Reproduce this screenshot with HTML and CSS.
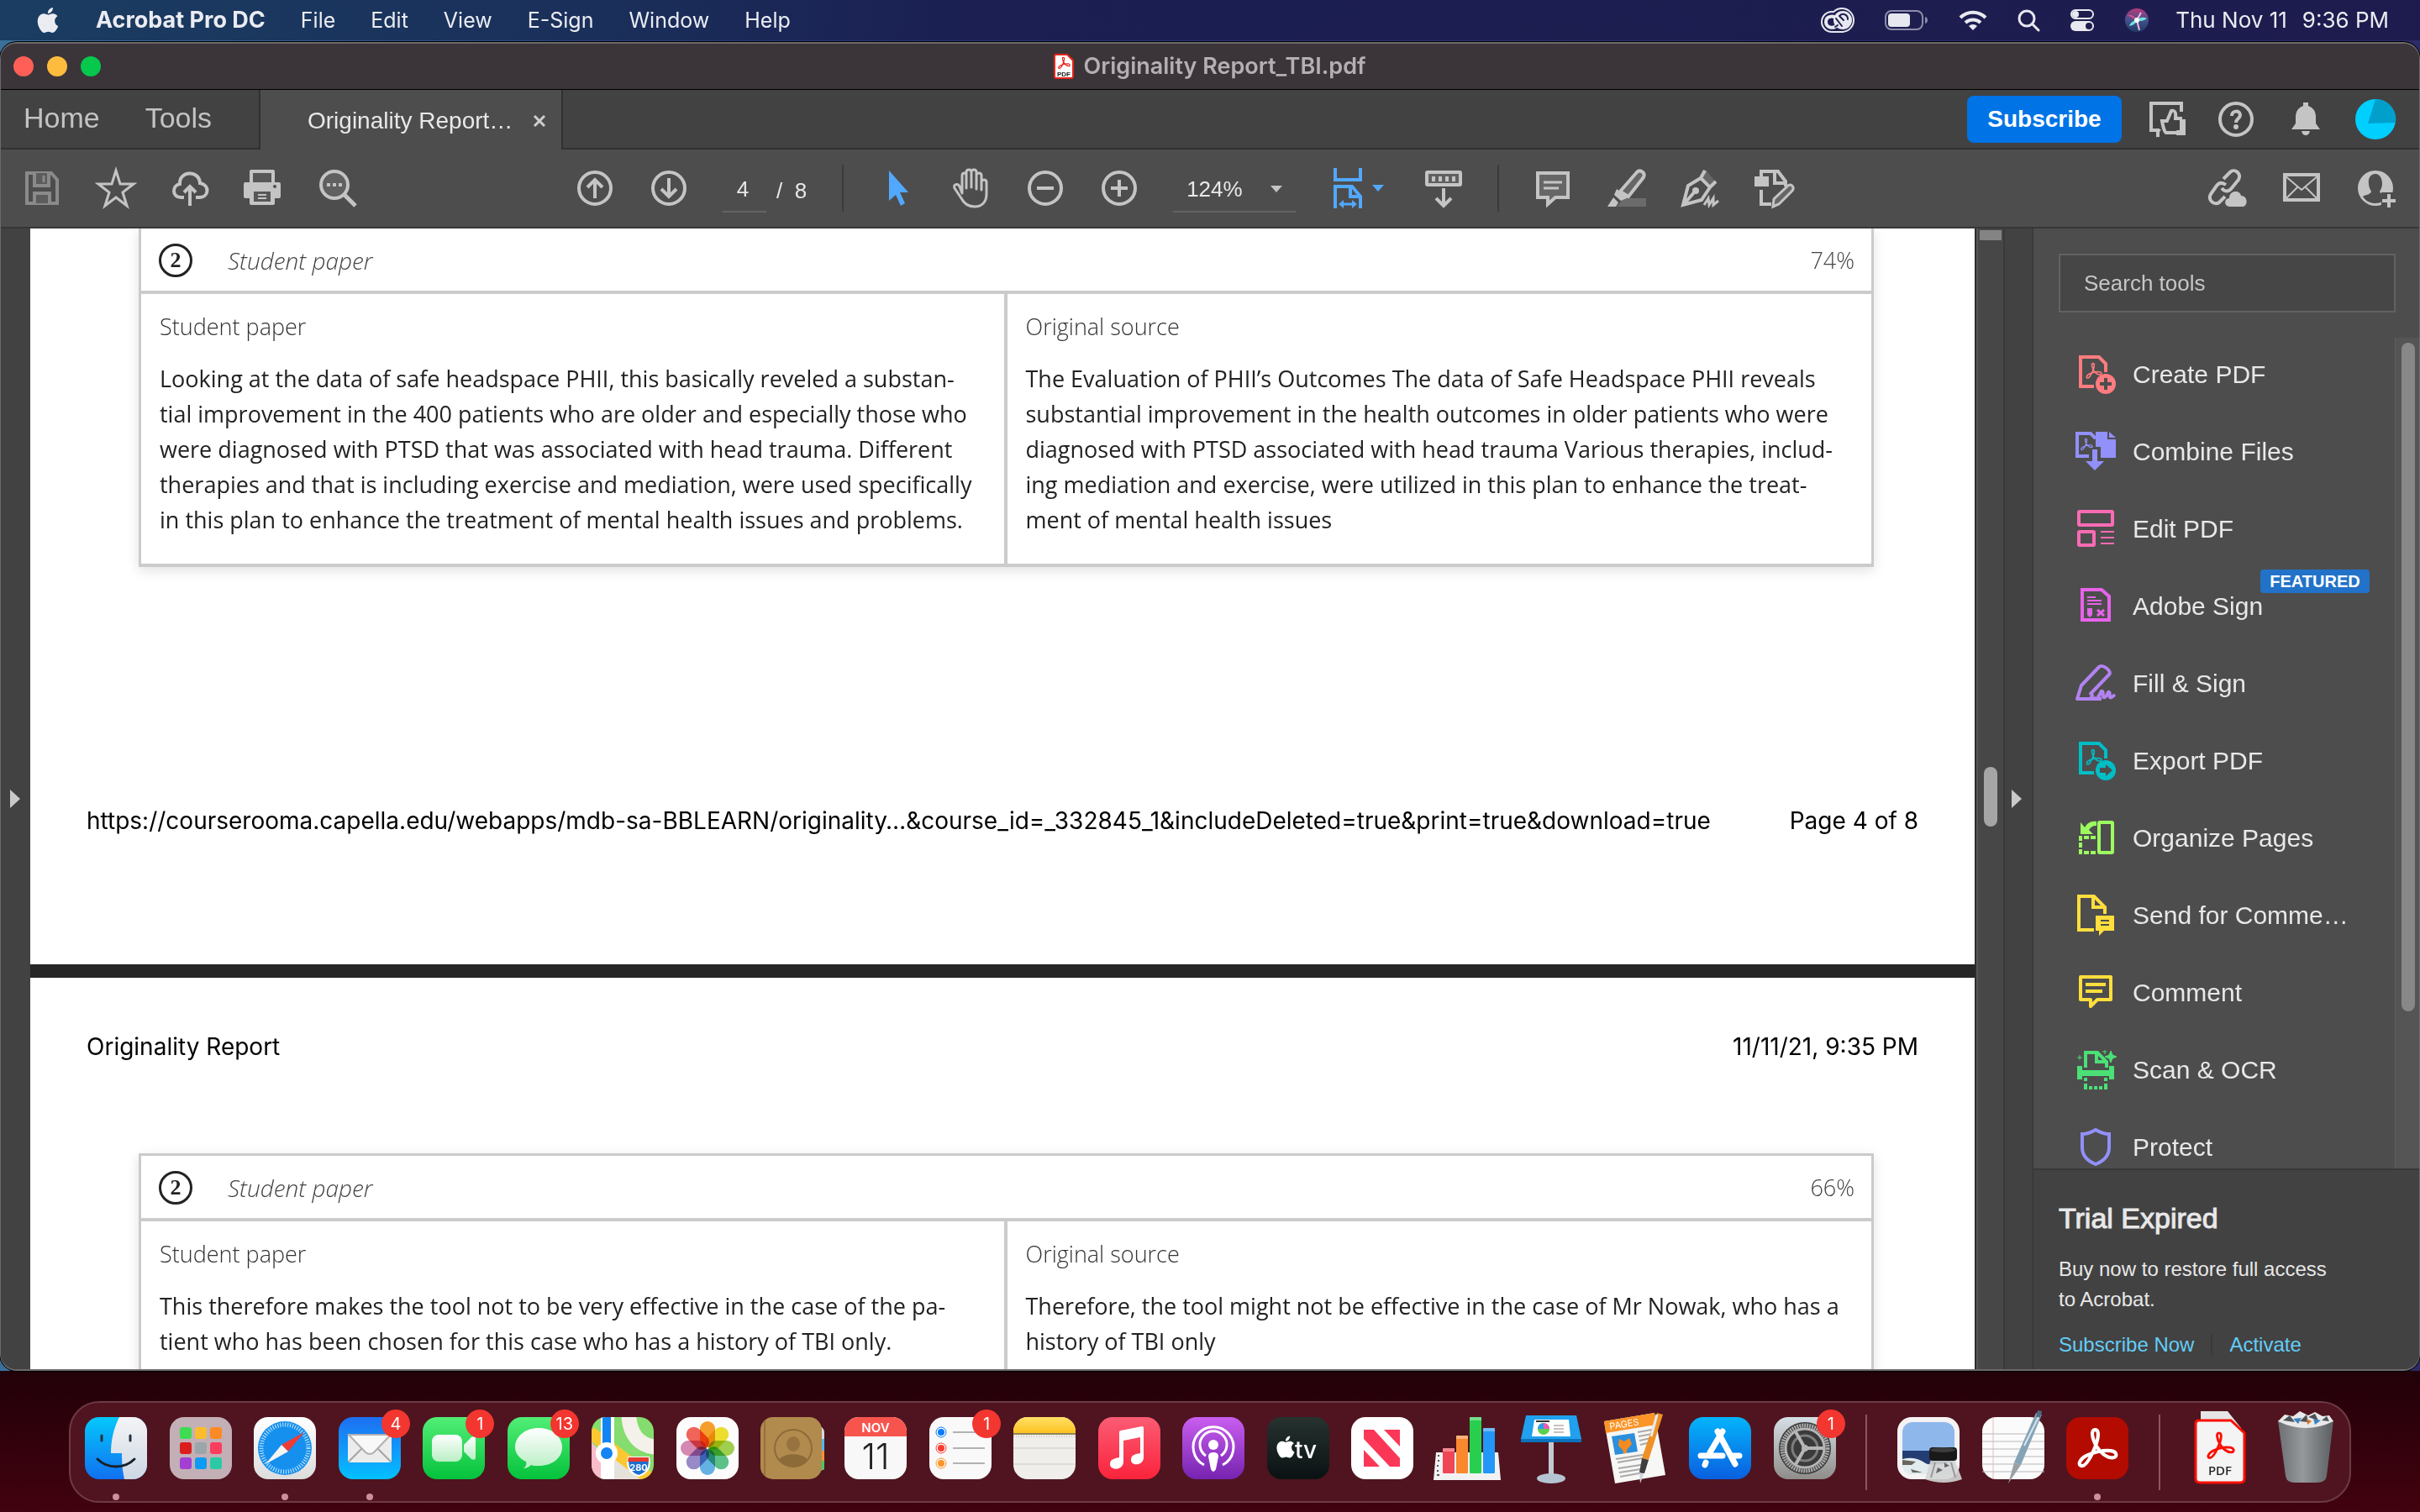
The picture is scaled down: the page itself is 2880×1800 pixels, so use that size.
FILE: index.html
```html
<!DOCTYPE html>
<html lang="en">
<head>
<meta charset="utf-8">
<title>Originality Report_TBI.pdf</title>
<link rel="stylesheet" href="styles.css">
</head>
<body>
<svg class="defs" aria-hidden="true">
  <defs>
    <linearGradient id="g-blue" x1="0" y1="0" x2="0" y2="1"><stop offset="0" stop-color="#1d6ff2"/><stop offset="1" stop-color="#04c0ff"/></linearGradient>
    <linearGradient id="g-store" x1="0" y1="0" x2="0" y2="1"><stop offset="0" stop-color="#04b4fb"/><stop offset="1" stop-color="#0a5fe0"/></linearGradient>
    <linearGradient id="g-finder" x1="0" y1="0" x2="0" y2="1"><stop offset="0" stop-color="#05c8fb"/><stop offset="1" stop-color="#1170f0"/></linearGradient>
    <linearGradient id="g-green" x1="0" y1="0" x2="0" y2="1"><stop offset="0" stop-color="#52ee76"/><stop offset="1" stop-color="#04c23c"/></linearGradient>
    <linearGradient id="g-white" x1="0" y1="0" x2="0" y2="1"><stop offset="0" stop-color="#ffffff"/><stop offset="1" stop-color="#dcdcdc"/></linearGradient>
    <linearGradient id="g-cam" x1="0" y1="0" x2="0" y2="1"><stop offset="0" stop-color="#ffffff"/><stop offset="1" stop-color="#b9efc4"/></linearGradient>
    <linearGradient id="g-face" x1="0" y1="0" x2="0" y2="1"><stop offset="0" stop-color="#f4f4f6"/><stop offset="1" stop-color="#cdd8e4"/></linearGradient>
    <linearGradient id="g-red" x1="0" y1="0" x2="0" y2="1"><stop offset="0" stop-color="#fb5c74"/><stop offset="1" stop-color="#fa233b"/></linearGradient>
    <linearGradient id="g-purple" x1="0" y1="0" x2="0" y2="1"><stop offset="0" stop-color="#c95ef0"/><stop offset="1" stop-color="#7623b0"/></linearGradient>
    <linearGradient id="g-tv" x1="0" y1="0" x2="0" y2="1"><stop offset="0" stop-color="#26332f"/><stop offset="1" stop-color="#0b1113"/></linearGradient>
    <linearGradient id="g-gear" x1="0" y1="0" x2="0" y2="1"><stop offset="0" stop-color="#d5dfe6"/><stop offset="1" stop-color="#8f8d8a"/></linearGradient>
    <linearGradient id="g-notes" x1="0" y1="0" x2="0" y2="1"><stop offset="0" stop-color="#ffe066"/><stop offset="1" stop-color="#fdc220"/></linearGradient>
    <linearGradient id="g-trash" x1="0" y1="0" x2="1" y2="0"><stop offset="0" stop-color="#6d7073"/><stop offset=".45" stop-color="#95999c"/><stop offset="1" stop-color="#5b5e61"/></linearGradient>
    <linearGradient id="g-siri" x1="0" y1="0" x2="0" y2="1"><stop offset="0" stop-color="#b8387c"/><stop offset=".5" stop-color="#43528c"/><stop offset="1" stop-color="#1f3a66"/></linearGradient>
    <clipPath id="tile"><rect width="74" height="74" rx="17"/></clipPath>
    <symbol id="acro" viewBox="0 0 100 100"><path d="M47 8c-11 0-7 20 3 38 9 15 24 26 36 26 13 0 12-14-3-16-17-2-40 3-56 11-14 7-20 19-13 23 10 4 22-18 30-36 9-20 15-46 3-46z" fill="none" stroke="currentColor" stroke-width="8" stroke-linejoin="round"/></symbol>
    <symbol id="apple" viewBox="0 0 24 24"><path fill="currentColor" d="M12.152 6.896c-.948 0-2.415-1.078-3.96-1.04-2.04.027-3.91 1.183-4.961 3.014-2.117 3.675-.546 9.103 1.519 12.09 1.013 1.454 2.208 3.09 3.792 3.039 1.52-.065 2.09-.987 3.935-.987 1.831 0 2.35.987 3.96.948 1.637-.026 2.676-1.48 3.676-2.948 1.156-1.688 1.636-3.325 1.662-3.415-.039-.013-3.182-1.221-3.22-4.857-.026-3.04 2.48-4.494 2.597-4.559-1.429-2.09-3.623-2.324-4.39-2.376-2-.156-3.675 1.09-4.61 1.09zM15.53 3.83c.843-1.012 1.4-2.427 1.245-3.83-1.207.052-2.662.805-3.532 1.818-.78.896-1.454 2.338-1.273 3.714 1.338.104 2.715-.688 3.559-1.701"/></symbol>
  </defs>
</svg>

<header class="menubar">
  <nav class="menus" aria-label="Application menu">
    <button class="menu" aria-label="Apple"><svg class="apple"><use href="#apple"/></svg></button>
    <button class="menu app-name">Acrobat Pro DC</button>
    <button class="menu">File</button>
    <button class="menu">Edit</button>
    <button class="menu">View</button>
    <button class="menu">E-Sign</button>
    <button class="menu">Window</button>
    <button class="menu">Help</button>
  </nav>
  <div class="status">
    <svg width="40" height="30" viewBox="0 0 40 30"><g fill="#e8e8f0"><circle cx="13" cy="17" r="13"/><circle cx="25" cy="15" r="15"/><path d="M13 20h14v10H13z"/></g><g fill="#1d1e50"><circle cx="13" cy="17" r="11"/><circle cx="25" cy="15" r="13"/><path d="M13 20h12v8H13z"/></g><circle cx="26" cy="15" r="11" fill="#e8e8f0"/><g fill="none" stroke-linecap="round"><path d="M19 21c-4 5-13 3-13-4s9-8 12-4l8 8" stroke="#e8e8f0" stroke-width="4"/><path d="M17 23l3-2M18 13l7 9M22 10l5 5M22 10c4-4 10-2 10 4" stroke="#1d1e50" stroke-width="2"/></g></svg>
    <svg width="52" height="24" viewBox="0 0 52 24"><rect x="1" y="1" width="44" height="22" rx="7" fill="none" stroke="#8d8cab" stroke-width="2"/><rect x="4" y="4" width="26" height="16" rx="4" fill="#e8e8f0"/><path d="M48 8c4 1 4 7 0 8z" fill="#8d8cab"/></svg>
    <svg width="34" height="26" viewBox="0 0 34 26" fill="none" stroke="#e8e8f0" stroke-width="4"><path d="M2 10a21 21 0 0 1 30 0M8 16a13 13 0 0 1 18 0"/><path d="M17 25l-5-5a7 7 0 0 1 10 0z" fill="#e8e8f0" stroke="none"/></svg>
    <svg width="26" height="26" viewBox="0 0 26 26" fill="none" stroke="#e8e8f0" stroke-width="3"><circle cx="11" cy="11" r="9"/><path d="M18 18l7 7" stroke-linecap="round"/></svg>
    <svg width="30" height="28" viewBox="0 0 30 28"><rect x="2" y="2" width="26" height="10" rx="5" fill="none" stroke="#e8e8f0" stroke-width="2"/><circle cx="7" cy="7" r="4" fill="#e8e8f0"/><rect x="1" y="15" width="28" height="12" rx="6" fill="#e8e8f0"/><circle cx="23" cy="21" r="4" fill="#1d1d50"/></svg>
    <svg width="28" height="28" viewBox="0 0 28 28"><circle cx="14" cy="14" r="14" fill="url(#g-siri)"/><path d="M14 14L3 8c5-1 9 2 11 6z" fill="#e24b8c"/><path d="M14 14c4-4 8-4 12-2-4 3-8 4-12 2zM14 14c-3 0-8 3-9 7 5-1 8-3 9-7z" fill="#6fe3dc"/><path d="M14 14l3 12M14 14l5-9" stroke="#f3b9e2" stroke-width="2"/><circle cx="14" cy="14" r="3" fill="#fff"/></svg>
    <time class="clock"><span>Thu Nov 11</span><span>9:36 PM</span></time>
  </div>
</header>

<section class="window">
  <div class="titlebar">
    <div class="lights">
      <button class="light close" aria-label="Close"></button>
      <button class="light mini" aria-label="Minimize"></button>
      <button class="light full" aria-label="Full screen"></button>
    </div>
    <h1 class="title"><svg class="doc-icon" viewBox="0 0 24 30"><path d="M1 3q0-2 2-2h13l7 7v19q0 2-2 2H3q-2 0-2-2z" fill="#fff" stroke="#e5251b" stroke-width="2"/><g color="#e5251b"><use href="#acro" x="4" y="3" width="16" height="16"/></g><text x="12" y="27" class="tiny-pdf">PDF</text></svg>Originality Report_TBI.pdf</h1>
  </div>

  <div class="tabbar">
    <div class="home-tabs"><button class="home-tab">Home</button><button class="home-tab">Tools</button></div>
    <div class="doc-tab"><button class="doc-name">Originality Report…</button><button class="tab-close" aria-label="Close tab"><svg width="14" height="14" viewBox="0 0 14 14"><path d="M1 1l12 12M13 1L1 13" stroke="currentColor" stroke-width="3"/></svg></button></div>
    <div class="account">
      <button class="subscribe">Subscribe</button>
      <button class="tool" aria-label="Feedback"><svg viewBox="0 0 48 48" fill="none" stroke="currentColor" stroke-width="4"><path d="M14 45v-8H6V5h36v10" stroke-width="4"/><path d="M12 36h6l-6 10z" fill="currentColor" stroke="none"/><path d="M19 26h6l5-12c4-1 6 2 5 9h6v17H24c-2 0-4-8-5-14z"/><path d="M37 24h10v19H36z" fill="currentColor" stroke="none"/><path d="M27 26l6-11v10h7v12H25z" fill="#424242" stroke="none"/></svg></button>
      <button class="tool" aria-label="Help"><svg viewBox="0 0 48 48" fill="none" stroke="currentColor" stroke-width="4"><circle cx="24" cy="24" r="19"/><path d="M19 20c0-7 10-7 10-1 0 4-5 4-5 9" stroke-width="4"/><circle cx="24" cy="33" r="3" fill="currentColor" stroke="none"/></svg></button>
      <button class="tool" aria-label="Notifications"><svg viewBox="0 0 48 48" fill="currentColor"><path d="M21 4h6v4c6 2 9 7 9 13v8l5 7H7l5-7v-8c0-6 3-11 9-13zM19 38h10q-1 5-5 5t-5-5z"/></svg></button>
      <button class="tool" aria-label="Account"><svg viewBox="0 0 48 48"><circle cx="24" cy="24" r="24" fill="#00cfff"/><path d="M24 0A24 24 0 0 1 48 28L15 29z" fill="#00a0cb"/></svg></button>
    </div>
  </div>

  <div class="toolbar">
    <button class="tool" aria-label="Save" disabled><svg viewBox="0 0 48 48" fill="none" stroke="currentColor" stroke-width="4"><path d="M6 6h29l7 8v28H6z"/><path d="M15 6v15h17V6M15 42V30h18v12" fill="#5c5c5c"/><path d="M26 9v8" stroke-width="3"/></svg></button>
    <button class="tool" aria-label="Star"><svg viewBox="0 0 48 48" fill="none" stroke="currentColor" stroke-width="3"><path d="M24 3l5 16h16L32 29l5 16-13-10-13 10 5-16L3 19h16z"/></svg></button>
    <button class="tool" aria-label="Upload"><svg viewBox="0 0 48 48" fill="none" stroke="currentColor" stroke-width="4"><path d="M17 35h-4c-10 0-11-14-1-16C11 3 35 2 36 18c12 2 11 17-1 17h-4"/><path d="M24 45V23M17 29l7-7 7 7"/></svg></button>
    <button class="tool" aria-label="Print"><svg viewBox="0 0 48 48" fill="currentColor"><path d="M7 4q0-2 2-2h26q2 0 2 2v13h5q2 0 2 2v15q0 2-2 2h-5v6q0 2-2 2H9q-2 0-2-2v-6H2q-2 0-2-2V19q0-2 2-2h5z"/><path d="M11 6h22v11H11zM12 28h20v12H12z" fill="#575757"/><path d="M17 31h10v2H17zM17 35h10v2H17z"/><circle cx="37" cy="22" r="2" fill="#4d4d4d"/></svg></button>
    <button class="tool" aria-label="Find"><svg viewBox="0 0 48 48" fill="none" stroke="currentColor" stroke-width="4"><circle cx="20" cy="20" r="16" fill="#606060"/><path d="M31 31l14 14" stroke-width="5"/><path d="M11 18h4v4h-4zM18 18h4v4h-4zM25 18h4v4h-4z" fill="currentColor" stroke="none"/></svg></button>

    <div class="tools-mid">
      <button class="tool" aria-label="Previous page"><svg viewBox="0 0 48 48" fill="none" stroke="currentColor" stroke-width="4"><circle cx="24" cy="24" r="19"/><path d="M24 36V15M15 23l9-9 9 9"/></svg></button>
      <button class="tool" aria-label="Next page"><svg viewBox="0 0 48 48" fill="none" stroke="currentColor" stroke-width="4"><circle cx="24" cy="24" r="19"/><path d="M24 12v21M15 25l9 9 9-9"/></svg></button>
      <label class="pager"><input class="page-number" value="4" aria-label="Page number"><span class="page-count">/&nbsp; 8</span></label>
      <span class="rule"></span>
      <button class="tool active" aria-label="Select"><svg viewBox="0 0 48 48" fill="currentColor"><path d="M14 3l23 26H27l6 13-5 3-6-13-8 7z"/></svg></button>
      <button class="tool" aria-label="Hand"><svg viewBox="0 0 48 48" fill="none" stroke="currentColor" stroke-width="3" stroke-linejoin="round"><path d="M13 30V9c0-4 5-4 5 0v15V5c0-4 6-4 6 0v18V5c0-4 6-4 6 0v20V9c0-4 6-4 6 0v17-9c0-4 6-4 6 0v14c0 10-6 15-14 15-9 0-13-4-16-10L4 24c-2-5 4-6 6-2z"/></svg></button>
      <button class="tool" aria-label="Zoom out"><svg viewBox="0 0 48 48" fill="none" stroke="currentColor" stroke-width="4"><circle cx="24" cy="24" r="19"/><path d="M14 24h20"/></svg></button>
      <button class="tool" aria-label="Zoom in"><svg viewBox="0 0 48 48" fill="none" stroke="currentColor" stroke-width="4"><circle cx="24" cy="24" r="19"/><path d="M14 24h20M24 14v20"/></svg></button>
      <div class="zoom"><select aria-label="Zoom level"><option>124%</option></select></div>
      <button class="tool fit active" aria-label="Fit width"><svg class="wide" viewBox="0 0 62 48" fill="none" stroke="currentColor" stroke-width="4"><path d="M2 0v14h30V0M2 48V22h20l10 12v14M20 23v11h12"/><path d="M9 43h16" stroke-width="3"/><path d="M6 43l6-5v10zM28 43l-6-5v10z" fill="currentColor" stroke="none"/><path d="M46 20h14l-7 8z" fill="currentColor" stroke="none"/></svg></button>
      <button class="tool keyboard" aria-label="Page display"><svg viewBox="0 0 48 48" fill="none" stroke="currentColor" stroke-width="4"><rect x="4" y="5" width="40" height="15" rx="1" fill="#606060"/><path d="M12 10v6M20 10v6M28 10v6M36 10v6M24 24v20M15 36l9 9 9-9"/></svg></button>
      <span class="rule"></span>
      <button class="tool" aria-label="Add comment"><svg viewBox="0 0 48 48" fill="none" stroke="currentColor" stroke-width="4"><path d="M6 6h36v29H27l-9 8v-8H6z" fill="#666"/><path d="M13 17h22M13 24h18" stroke-width="3"/></svg></button>
      <button class="tool" aria-label="Highlight"><svg viewBox="0 0 48 48" fill="none" stroke="currentColor" stroke-width="4"><path d="M12 46l8-10h27v10z" fill="#6b6b6b" stroke="none"/><path d="M16 28L36 5c4-4 11 1 8 6L26 34z" fill="#666"/><path d="M12 25l14 10-9 4-8-7zM8 35l6 6-3 5H1z" fill="currentColor" stroke="none"/></svg></button>
      <button class="tool" aria-label="Sign"><svg viewBox="0 0 48 48" fill="none" stroke="currentColor" stroke-width="4"><path d="M30 2l12 15-6 6-12-11z" fill="#666" stroke="none"/><path d="M29 3l-5 9 11 11 7-7M24 12L9 21 3 44l22-6 10-15M4 43l13-15"/><circle cx="18" cy="27" r="4" fill="currentColor" stroke="none"/><path d="M28 44l5-8 1 8 5-8v8l6-5" stroke-width="3"/></svg></button>
      <button class="tool" aria-label="Edit page"><svg viewBox="0 0 48 48" fill="none" stroke="currentColor" stroke-width="4"><path d="M0 10h17v12H0z" fill="currentColor" stroke="none"/><path d="M8 11V4h20l9 12v6M24 5v13h12M8 26v17h12"/><path d="M22 46l1-9 17-16c4-3 8 2 5 6L29 43z" fill="#666" stroke-width="3"/></svg></button>
    </div>

    <div class="tools-end">
      <button class="tool" aria-label="Share link"><svg viewBox="0 0 48 48" fill="none" stroke="currentColor" stroke-width="4"><path d="M19 13l8-8c5-5 14 1 10 9l-9 11c-4 4-8 3-11-1M22 20c-4-3-8-3-11 1L4 31c-4 7 4 14 10 10l7-7"/><path d="M26 46c-7-1-6-10 0-10 0-10 13-10 14-3 8 0 9 12 2 13z" fill="currentColor" stroke="none"/></svg></button>
      <button class="tool" aria-label="Email"><svg viewBox="0 0 48 48" fill="none" stroke="currentColor" stroke-width="4"><rect x="4" y="8" width="40" height="30"/><path d="M4 9l20 17L44 9M4 38l15-15M44 38L29 23" stroke-width="2"/></svg></button>
      <button class="tool" aria-label="Add people"><svg viewBox="0 0 48 48"><circle cx="24" cy="24" r="21" fill="currentColor"/><path d="M24 7c-6 0-9 5-8 12 0 4 2 7 3 9-1 4-8 4-10 6 4 6 9 8 15 8s12-3 15-8c-2-2-9-2-10-6 1-2 3-5 3-9 0-7-3-12-8-12z" fill="#4d4d4d"/><path d="M31 29h17v19H31z" fill="#4d4d4d"/><path d="M40 31v16M32 39h16" stroke="currentColor" stroke-width="4"/></svg></button>
    </div>
  </div>

  <div class="workspace">
    <button class="rail left-rail" aria-label="Show navigation pane"></button>
    <main class="document">
      <article class="page page-4">
        <section class="match">
          <div class="match-head"><span class="num">2</span><em>Student paper</em><span class="pct">74%</span></div>
          <div class="cols">
            <div class="col"><h3>Student paper</h3><p>Looking at the data of safe headspace PHII, this basically reveled a substan-<br>tial improvement in the 400 patients who are older and especially those who<br>were diagnosed with PTSD that was associated with head trauma. Different<br>therapies and that is including exercise and mediation, were used specifically<br>in this plan to enhance the treatment of mental health issues and problems.</p></div>
            <div class="col"><h3>Original source</h3><p>The Evaluation of PHII’s Outcomes The data of Safe Headspace PHII reveals<br>substantial improvement in the health outcomes in older patients who were<br>diagnosed with PTSD associated with head trauma Various therapies, includ-<br>ing mediation and exercise, were utilized in this plan to enhance the treat-<br>ment of mental health issues</p></div>
          </div>
        </section>
        <footer class="running"><span>https://courserooma.capella.edu/webapps/mdb-sa-BBLEARN/originality…&amp;course_id=_332845_1&amp;includeDeleted=true&amp;print=true&amp;download=true</span><span>Page 4 of 8</span></footer>
      </article>
      <article class="page page-5">
        <header class="running"><span>Originality Report</span><span>11/11/21, 9:35 PM</span></header>
        <section class="match">
          <div class="match-head"><span class="num">2</span><em>Student paper</em><span class="pct">66%</span></div>
          <div class="cols">
            <div class="col"><h3>Student paper</h3><p>This therefore makes the tool not to be very effective in the case of the pa-<br>tient who has been chosen for this case who has a history of TBI only.</p></div>
            <div class="col"><h3>Original source</h3><p>Therefore, the tool might not be effective in the case of Mr Nowak, who has a<br>history of TBI only</p></div>
          </div>
        </section>
      </article>
    </main>
    <div class="doc-scroll"><span class="split"></span><span class="thumb"></span></div>
    <button class="rail right-rail" aria-label="Hide tools pane"></button>
    <aside class="panel">
      <input class="search" type="search" placeholder="Search tools" aria-label="Search tools">
      <div class="tool-scroll">
        <ul class="tool-list">
          <li><a href="#" class="entry red"><svg viewBox="0 0 48 48" fill="none" stroke="currentColor" stroke-width="4"><path d="M22 38H6V3h22l8 8v10"/><use href="#acro" x="11" y="9" width="21" height="21"/><circle cx="36" cy="35" r="12" fill="currentColor" stroke="none"/><path d="M36 28v14M29 35h14" stroke="#4d4d4d"/></svg>Create PDF</a></li>
          <li><a href="#" class="entry violet"><svg viewBox="0 0 48 48" fill="none" stroke="currentColor" stroke-width="4"><path d="M16 29H2V2h16l6 6"/><use href="#acro" x="5" y="7" width="16" height="16"/><path d="M24 0h14v9h10v22H30V18h-6zM40 0l8 7h-8zM20 21h6v14h8L23 46 12 35h8z" fill="currentColor" stroke="none"/></svg>Combine Files</a></li>
          <li><a href="#" class="entry pink"><svg viewBox="0 0 48 48" fill="none" stroke="currentColor" stroke-width="4"><rect x="4" y="3" width="40" height="16" rx="1"/><rect x="4" y="27" width="18" height="16" rx="1"/><path d="M30 27h16M30 34h16M30 41h16" stroke-width="2"/></svg>Edit PDF</a></li>
          <li><a href="#" class="entry magenta"><svg viewBox="0 0 48 48" fill="none" stroke="currentColor" stroke-width="4"><path d="M8 4h23l9 8v28H8z"/><path d="M14 13h10M14 17h17M14 21h17" stroke-width="2"/><path d="M14 26h6v8l-3 3-3-3z" fill="currentColor" stroke="none"/><path d="M26 28l8 7M34 28l-8 7" stroke-width="3"/></svg>Adobe Sign</a><span class="badge-featured">FEATURED</span></li>
          <li><a href="#" class="entry purple"><svg viewBox="0 0 48 48" fill="none" stroke="currentColor" stroke-width="4" stroke-linejoin="round"><path d="M31 42H2l5-16L28 4c4-4 16 5 12 9L17 37M31 42l-10-1c-3 0-2-3 0-5"/><path d="M26 40c4-2 4-9 6-7s-1 8 3 7c3-1 3-7 5-6s-1 8 3 6l4-3"/></svg>Fill &amp; Sign</a></li>
          <li><a href="#" class="entry teal"><svg viewBox="0 0 48 48" fill="none" stroke="currentColor" stroke-width="4"><path d="M22 38H6V3h22l8 8v10"/><use href="#acro" x="11" y="9" width="21" height="21"/><circle cx="36" cy="35" r="12" fill="currentColor" stroke="none"/><path d="M29 32h7v-4l8 7-8 7v-4h-7z" fill="#4d4d4d" stroke="none"/></svg>Export PDF</a></li>
          <li><a href="#" class="entry lime"><svg viewBox="0 0 48 48" fill="none" stroke="currentColor" stroke-width="4"><rect x="28" y="5" width="16" height="36" rx="1"/><path d="M25 4c-7-1-11 2-14 7l-5-6v14h15l-5-5c2-3 4-5 9-5z" fill="currentColor" stroke="none"/><path d="M24 23H4M24 41H4" stroke-dasharray="6 2"/><path d="M6 21v22" stroke-dasharray="6 2"/></svg>Organize Pages</a></li>
          <li><a href="#" class="entry yellow"><svg viewBox="0 0 48 48" fill="none" stroke="currentColor" stroke-width="4"><path d="M22 41H4V1h18l13 13v8M21 2v12h13"/><path d="M24 24h22v18H34l-6 6v-6h-4z" fill="currentColor" stroke="none"/><path d="M30 30h10M30 35h10" stroke="#4d4d4d" stroke-width="2"/></svg>Send for Comme…</a></li>
          <li><a href="#" class="entry yellow"><svg viewBox="0 0 48 48" fill="none" stroke="currentColor" stroke-width="4" stroke-linejoin="round"><path d="M6 5h36v27H26l-8 8v-8H6z"/><path d="M12 14h24M12 22h20"/></svg>Comment</a></li>
          <li><a href="#" class="entry green"><svg viewBox="0 0 48 48" fill="none" stroke="currentColor" stroke-width="4"><path d="M12 21V3h14l11 11v7M25 4v10h11"/><path d="M2 19h6v5h32v-5h6v16h-6v-4H8v4H2z" fill="currentColor" stroke="none"/><path d="M12 33v12M36 33v12" stroke-dasharray="4 3"/><path d="M10 45h28" stroke-dasharray="4 2"/><path d="M42 1l2 5 5 2-5 2-2 5-2-5-5-2 5-2zM35 0v5M32 2h5M5 6v6M2 9h6" stroke-width="1" fill="currentColor"/></svg>Scan &amp; OCR</a></li>
          <li><a href="#" class="entry indigo"><svg viewBox="0 0 48 48" fill="none" stroke="currentColor" stroke-width="4"><path d="M24 3c5 3 10 5 16 5v16c0 9-6 16-16 20C14 40 8 33 8 24V8c6 0 11-2 16-5z"/></svg>Protect</a></li>
        </ul>
        <div class="list-track"><span class="list-thumb"></span></div>
      </div>
      <div class="trial">
        <h2>Trial Expired</h2>
        <p>Buy now to restore full access<br>to Acrobat.</p>
        <div class="trial-links"><a href="#">Subscribe Now</a><span></span><a href="#">Activate</a></div>
      </div>
    </aside>
  </div>
</section>

<div class="dock-area">
  <nav class="dock" aria-label="Dock">
    <button class="app running-app" aria-label="Finder"><svg viewBox="0 0 74 74"><g clip-path="url(#tile)"><path d="M0 0h74v74H0z" fill="url(#g-finder)"/><path d="M41 0h33v74H47c-2-9-3-18-3-31H31C31 28 34 14 41 0z" fill="url(#g-face)"/></g><path d="M20 22v6M54 22v6" stroke="#23323e" stroke-width="3" stroke-linecap="round"/><path d="M15 50c12 12 32 12 44 0" fill="none" stroke="#16222c" stroke-width="3" stroke-linecap="round"/></svg></button>
    <button class="app" aria-label="Launchpad"><svg viewBox="0 0 74 74"><rect width="74" height="74" rx="17" fill="#c3b0b6"/><g><rect x="12" y="12" width="14" height="14" rx="3" fill="#3ddc52"/><rect x="30" y="12" width="14" height="14" rx="3" fill="#fbbd2c"/><rect x="48" y="12" width="14" height="14" rx="3" fill="#fb8a24"/><rect x="12" y="30" width="14" height="14" rx="3" fill="#dc1d1d"/><rect x="30" y="30" width="14" height="14" rx="3" fill="#9aa6aa"/><rect x="48" y="30" width="14" height="14" rx="3" fill="#fb3d5e"/><rect x="12" y="48" width="14" height="14" rx="3" fill="#a33fd2"/><rect x="30" y="48" width="14" height="14" rx="3" fill="#0e9bf5"/><rect x="48" y="48" width="14" height="14" rx="3" fill="#2cc9a6"/></g></svg></button>
    <button class="app running-app" aria-label="Safari"><svg viewBox="0 0 74 74"><rect width="74" height="74" rx="17" fill="url(#g-white)"/><circle cx="37" cy="37" r="32" fill="#1590ee"/><circle cx="37" cy="37" r="28" fill="none" stroke="#cfeaff" stroke-width="5" stroke-dasharray="1 2"/><path d="M60 18L41 41l-8-8z" fill="#f03b35"/><path d="M14 56l19-23 8 8z" fill="#f4f4f4"/></svg></button>
    <button class="app running-app" aria-label="Mail"><svg viewBox="0 0 74 74"><rect width="74" height="74" rx="17" fill="url(#g-blue)"/><rect x="11" y="20" width="52" height="34" rx="3" fill="#ececec"/><path d="M12 53l18-18M62 53L44 35" stroke="#a5a5a5" stroke-width="2"/><path d="M12 21l20 21q5 4 10 0l20-21z" fill="#f8f8f8" stroke="#b0b0b0" stroke-width="2"/></svg><span class="count">4</span></button>
    <button class="app" aria-label="FaceTime"><svg viewBox="0 0 74 74"><rect width="74" height="74" rx="17" fill="url(#g-green)"/><rect x="11" y="21" width="36" height="32" rx="8" fill="url(#g-cam)"/><path d="M49 33l9-9q5-2 5 2v22q0 4-5 2l-9-9z" fill="url(#g-cam)"/></svg><span class="count">1</span></button>
    <button class="app" aria-label="Messages"><svg viewBox="0 0 74 74"><rect width="74" height="74" rx="17" fill="url(#g-green)"/><path d="M37 13c16 0 28 10 28 23S53 58 37 58c-4 0-7 0-9-1-2 2-5 4-9 4 3-2 4-5 3-8C14 49 9 43 9 36c0-13 12-23 28-23z" fill="url(#g-cam)"/></svg><span class="count">13</span></button>
    <button class="app" aria-label="Maps"><svg viewBox="0 0 74 74"><g clip-path="url(#tile)"><path d="M0 0h74v74H0z" fill="#84dd6e"/><path d="M44-8c0 28 12 44 38 44" fill="none" stroke="#f4f1ea" stroke-width="18"/><path d="M27 40l32 34H27z" fill="#e4e2da"/><path d="M-2 18l80 62" stroke="#fbc832" stroke-width="15"/><path d="M0 30l12 12v32H0z" fill="#f9bccb"/><path d="M11 0h16v74H11z" fill="#fff"/><path d="M13 0h10v42H13z" fill="#1384f3"/></g><circle cx="18" cy="43" r="10" fill="#1384f3" stroke="#fff" stroke-width="6"/><path d="M44 48h24q4 17-12 22Q40 65 44 48z" fill="#1d6fd0" stroke="#fff" stroke-width="2"/><path d="M44 48h24v5H43z" fill="#e8392f"/><text class="shield" x="56" y="64">280</text></svg></button>
    <button class="app" aria-label="Photos"><svg viewBox="0 0 74 74"><rect width="74" height="74" rx="17" fill="#fcfcfc"/><g class="petals"><rect x="28" y="5" width="18" height="31" rx="9" fill="#f9a02c"/><rect x="28" y="5" width="18" height="31" rx="9" fill="#f0e02f" transform="rotate(45 37 37)"/><rect x="28" y="5" width="18" height="31" rx="9" fill="#a2d150" transform="rotate(90 37 37)"/><rect x="28" y="5" width="18" height="31" rx="9" fill="#5cc489" transform="rotate(135 37 37)"/><rect x="28" y="5" width="18" height="31" rx="9" fill="#65b3e6" transform="rotate(180 37 37)"/><rect x="28" y="5" width="18" height="31" rx="9" fill="#9a8cc9" transform="rotate(225 37 37)"/><rect x="28" y="5" width="18" height="31" rx="9" fill="#d78ab4" transform="rotate(270 37 37)"/><rect x="28" y="5" width="18" height="31" rx="9" fill="#f4655a" transform="rotate(315 37 37)"/></g></svg></button>
    <button class="app" aria-label="Contacts"><svg viewBox="0 0 74 74"><path d="M60 8q16 2 16 10v44l-14 6z" fill="#d8d8d8"/><path d="M62 26h14v14H62z" fill="#52b9f0"/><path d="M62 40h14v12H62z" fill="#f79433"/><path d="M62 52h14v10l-14 6z" fill="#48c964"/><rect width="73" height="74" rx="15" fill="#b18a4e"/><path d="M5 4v66" stroke="#94713c" stroke-width="2"/><circle cx="39" cy="37" r="22" fill="none" stroke="#8d6b39" stroke-width="2"/><ellipse cx="39" cy="32" rx="8" ry="9" fill="#97743f"/><path d="M22 51c5-9 29-9 34 0-8 11-26 11-34 0z" fill="#8d6b39"/></svg></button>
    <button class="app" aria-label="Calendar"><svg viewBox="0 0 74 74"><g clip-path="url(#tile)"><path d="M0 0h74v74H0z" fill="#f8f8f8"/><path d="M0 0h74v23H0z" fill="#f8544e"/></g><text class="month" x="37" y="18">NOV</text><text class="day" x="37" y="62">11</text></svg></button>
    <button class="app" aria-label="Reminders"><svg viewBox="0 0 74 74"><rect width="74" height="74" rx="17" fill="#f9f9f9"/><path d="M28 18h38M28 37h38M28 55h38" stroke="#b2b2b2" stroke-width="2"/><g fill="none" stroke-width="1"><circle cx="14" cy="18" r="6" stroke="#0a7bfa"/><circle cx="14" cy="37" r="6" stroke="#fb3b30"/><circle cx="14" cy="55" r="6" stroke="#fb9526"/></g><circle cx="14" cy="18" r="4" fill="#0a7bfa"/><circle cx="14" cy="37" r="4" fill="#fb3b30"/><circle cx="14" cy="55" r="4" fill="#fb9526"/></svg><span class="count">1</span></button>
    <button class="app" aria-label="Notes"><svg viewBox="0 0 74 74"><g clip-path="url(#tile)"><path d="M0 0h74v74H0z" fill="#efeeeb"/><path d="M0 0h74v19H0z" fill="url(#g-notes)"/><path d="M0 20h74" stroke="#8f8459" stroke-width="2"/><path d="M0 23h74" stroke="#aaa" stroke-width="1" stroke-dasharray="1 2"/><path d="M0 37h74M0 56h74" stroke="#cbcac7" stroke-width="1"/></g></svg></button>
    <button class="app" aria-label="Music"><svg viewBox="0 0 74 74"><rect width="74" height="74" rx="17" fill="url(#g-red)"/><path d="M25 18q0-2 2-2l25-5q2 0 2 2v35c0 10-15 11-15 3 0-6 5-7 11-8V24l-20 4v25c0 11-16 11-16 3 0-6 6-7 11-8z" fill="#fff"/></svg></button>
    <button class="app" aria-label="Podcasts"><svg viewBox="0 0 74 74"><rect width="74" height="74" rx="17" fill="url(#g-purple)"/><g fill="none" stroke="#fff" stroke-width="3"><path d="M26 57a24 24 0 1 1 22 0"/><path d="M28 46a16 16 0 1 1 18 0"/></g><circle cx="37" cy="33" r="6" fill="#fff"/><path d="M31 47q0-5 6-5t6 5l-3 15q-3 6-6 0z" fill="#fff"/></svg></button>
    <button class="app" aria-label="TV"><svg viewBox="0 0 74 74" color="#fff"><rect width="74" height="74" rx="17" fill="url(#g-tv)"/><use href="#apple" x="9" y="22" width="26" height="27"/><text class="tv" x="33" y="49">tv</text></svg></button>
    <button class="app" aria-label="News"><svg viewBox="0 0 74 74"><rect width="74" height="74" rx="17" fill="#fff"/><path d="M15 15h12l31 34v10H46L15 26zM39 15h19v20zM15 39v20h19z" fill="#fb3758"/></svg></button>
    <button class="app" aria-label="Numbers"><svg viewBox="0 0 74 74"><path d="M0 42h74l3 33H-3z" fill="#f2f2f2"/><g fill="#555"><path d="M2 45h2v2H2zM2 51h2v2H2zM1 57h2v2H1zM1 63h2v2H1zM1 68h3v2H1z"/></g><rect x="8" y="37" width="14" height="30" rx="1" fill="#ef4757"/><rect x="24" y="22" width="14" height="45" rx="1" fill="#f9882f"/><rect x="40" y="0" width="14" height="67" rx="1" fill="#28cf4f"/><rect x="56" y="13" width="14" height="54" rx="1" fill="#2297f8"/><path d="M8 37h14v4H8zM24 22h14v4H24zM40 0h14v4H40zM56 13h14v4H56z" fill="#fff" opacity=".35"/></svg></button>
    <button class="app" aria-label="Keynote"><svg viewBox="0 0 74 74"><path d="M34 30h6v44h-6z" fill="#c3cad3"/><ellipse cx="37" cy="73" rx="17" ry="6" fill="#b5c4d2"/><path d="M7-2h60l6 28H1z" fill="#20a0ee"/><path d="M1 26h72v4H1z" fill="#0c72bd"/><path d="M17 3h41l2 20H14z" fill="#fff"/><circle cx="28" cy="14" r="7" fill="#5bcf4e"/><path d="M28 14V7a7 7 0 0 1 7 7z" fill="#ee5ab1"/><path d="M28 14V7a7 7 0 0 0-7 7z" fill="#2a9df1"/><path d="M40 10h12M40 14h12M40 18h12" stroke="#c9c0c0" stroke-width="2"/><path d="M19 5h16" stroke="#333" stroke-width="2"/></svg></button>
    <button class="app" aria-label="Pages"><svg viewBox="0 0 74 74"><path d="M-1 5l60-10 13 74-60 10z" fill="#f7f7f5"/><path d="M-1 5l60-10 2 14L1 19z" fill="#fb9427"/><text class="pages-title" x="6" y="15" transform="rotate(-9 6 15)">PAGES</text><path d="M8 23l27-4 4 22-27 4z" fill="#2b8fdc"/><path d="M17 26l6 3 6-4 3 7-6 7v4h-4l-1-4-5-5z" fill="#f58b20"/><path d="M39 18l17-3M40 23l16-3M41 28l14-3M42 33l12-3M13 50l38-6M15 54l36-6M16 61l33-5M17 66l32-5M18 71l28-5" stroke="#aaa" stroke-width="2"/><path d="M62-5l7 2-17 54-8-2z" fill="#ef9127"/><path d="M44 49l8 2-5 16-6-1z" fill="#3e3e40"/><path d="M41 66l5 2-4 11z" fill="#cfd5da"/><path d="M62-3l-7 26" stroke="#e5ebef" stroke-width="3"/></svg></button>
    <button class="app" aria-label="App Store"><svg viewBox="0 0 74 74"><rect width="74" height="74" rx="17" fill="url(#g-store)"/><g stroke="#fff" stroke-width="7" stroke-linecap="round"><path d="M40 17L25 42M34 17l21 39M14 46h26M53 46h7M20 54l-1 3"/></g></svg></button>
    <button class="app" aria-label="System Preferences"><svg viewBox="0 0 74 74" fill="none"><rect width="74" height="74" rx="17" fill="url(#g-gear)"/><circle cx="37" cy="37" r="31" fill="#3b3b3b"/><circle cx="37" cy="37" r="27" stroke="#a9a9a9" stroke-width="5" stroke-dasharray="2 1"/><circle cx="37" cy="37" r="23" stroke="#b5b5b5" stroke-width="3"/><circle cx="37" cy="37" r="15" stroke="#7d7d7d" stroke-width="3"/><path d="M37 37h24M37 37L25 16M37 37L25 58" stroke="#b5b5b5" stroke-width="4"/><circle cx="37" cy="37" r="4" fill="#b5b5b5"/></svg><span class="count">1</span></button>
    <span class="dock-rule"></span>
    <button class="app" aria-label="Preview"><svg viewBox="0 0 74 74"><rect width="74" height="74" rx="17" fill="#f5f3f3"/><rect x="6" y="6" width="62" height="62" rx="12" fill="#8eb8ec"/><path d="M6 40h62v16H6z" fill="#243e73"/><path d="M6 50q14-4 26 4t36-3v5q0 12-12 12H18Q6 68 6 56z" fill="#e2ebee"/><path d="M6 51l16 2-5 4H6zM16 62l14 4H18z" fill="#66665e"/><path d="M40 50h28l9 24q-22 8-44 0z" fill="#d4d5d5" opacity=".9"/><path d="M45 54l-5 18M64 54l5 18" stroke="#999" stroke-width="2"/><path d="M48 60l6 3-8 4zM56 54l6 4-6 2z" fill="#666"/><rect x="38" y="36" width="33" height="16" rx="4" fill="#191919"/><ellipse cx="54" cy="39" rx="15" ry="3" fill="#3c3c3c"/></svg></button>
    <button class="app" aria-label="TextEdit"><svg viewBox="0 0 74 74"><rect width="74" height="74" rx="17" fill="#fbfbfb"/><path d="M13 0v74" stroke="#f3b8bc" stroke-width="1"/><path d="M0 20h74M0 29h74M0 38h74M0 47h74M0 56h74M0 65h74" stroke="#b9b9b9" stroke-width="1"/><path d="M64-5l7 2-25 60-8-3z" fill="#86a3b6"/><path d="M66-8l5 1-2 8-5-1z" fill="#4c6c84"/><path d="M38 54l8 3-15 22z" fill="#9aa0a4"/><path d="M67 0L50 34" stroke="#d8e8f2" stroke-width="2"/></svg></button>
    <button class="app running-app" aria-label="Acrobat"><svg viewBox="0 0 74 74" color="#fff"><rect width="74" height="74" rx="17" fill="#b30b00"/><use href="#acro" x="10" y="11" width="52" height="52"/></svg></button>
    <span class="dock-rule"></span>
    <button class="app" aria-label="PDF document"><svg viewBox="0 0 74 74" color="#fa0f00"><path d="M13-7h32l16 20v8H13z" fill="#e5e5e5"/><path d="M7 8q0-4 4-4h38l16 15v54q0 5-5 5H12q-5 0-5-5z" fill="#f4f4f4" stroke="#fa0f00" stroke-width="3"/><use href="#acro" x="18" y="16" width="36" height="36"/><text class="pdf" x="36" y="69">PDF</text></svg></button>
    <button class="app" aria-label="Trash"><svg viewBox="0 0 74 74"><path d="M4 4h66l-8 66q-1 8-12 8H24q-10 0-11-8z" fill="url(#g-trash)"/><path d="M4 5l8-8 10 2 8-6 10 5 8-4 9 5 8-1 5 7q-33 16-66 0z" fill="#e9e9e9"/><path d="M10 4l8-6 6 8zM40 0l8-4 4 8zM56 4l6-5 3 6zM30 5l8-8 2 9z" fill="#4d5157"/><path d="M22 2l10-1-4 7zM46 2l9 2-7 5z" fill="#3c82c0"/><path d="M38 2l6 3-5 4z" fill="#d8732b"/></svg></button>
  </nav>
</div>
</body>
</html>
```
FILE: styles.css
```css
* { box-sizing: border-box; }
body {
  margin: 0;
  height: 100vh;
  display: flex;
  flex-direction: column;
  overflow: hidden;
  background: linear-gradient(90deg, #3a719b 0%, #2a3a72 30%, #2b2b68 100%);
  font-family: "Liberation Sans", Arial, sans-serif;
  color: #e8e8e8;
}
button { border: 0; padding: 0; background: none; color: inherit; font: inherit; }
svg { display: block; overflow: visible; }
a { color: inherit; text-decoration: none; }
.defs { position: absolute; width: 0; height: 0; }

/* macOS menu bar */
.menubar {
  height: 48px;
  flex: none;
  display: flex;
  justify-content: space-between;
  align-items: center;
  padding: 0 37px 0 42px;
  background: linear-gradient(90deg, #1b3d62 0%, #1a2f5a 25%, #1b1f52 40%, #1e1c4e 100%);
  font-family: Inter, sans-serif;
  font-size: 25px;
  line-height: 48px;
  color: #ebecf2;
}
.menus { display: flex; align-items: center; gap: 42px; }
.apple { width: 30px; height: 32px; }
.app-name { font-weight: 700; font-size: 27px; }
.status { display: flex; align-items: center; gap: 36px; }
.clock { display: flex; gap: 18px; margin-left: -4px; font-size: 26px; }

/* Acrobat window */
.window {
  flex: 1;
  min-height: 0;
  margin-top: 2px;
  display: flex;
  flex-direction: column;
  overflow: hidden;
  border: 2px solid #6c696c;
  border-width: 2px 1px 2px 1px;
  border-radius: 20px;
  background: #424242;
  box-shadow: 0 0 0 1px #000;
  position: relative;
  z-index: 1;
}
.titlebar {
  height: 55px;
  flex: none;
  display: grid;
  grid-template-columns: 1fr auto 1fr;
  align-items: center;
  padding: 0 15px;
  background: #3b3539;
  border-bottom: 1px solid #000;
}
.lights { display: flex; gap: 16px; }
.light { width: 24px; height: 24px; border-radius: 50%; }
.close { background: #ff5f57; }
.mini { background: #febc3f; }
.full { background: #05c84d; }
.title {
  display: flex;
  align-items: center;
  gap: 11px;
  margin: 0;
  font: 600 27px/50px Inter, sans-serif;
  color: #b4afb2;
}
.doc-icon { width: 24px; height: 30px; }
.tiny-pdf { font: 700 8px "Liberation Sans", sans-serif; text-anchor: middle; fill: #222; }

.tabbar { height: 71px; flex: none; display: flex; }
.home-tabs, .account { border-bottom: 2px solid #313131; }
.home-tabs {
  width: 307px;
  display: flex;
  gap: 54px;
  padding: 0 0 3px 27px;
  font-size: 34px;
  color: #c3c3c3;
}
.doc-tab {
  width: 362px;
  display: flex;
  align-items: center;
  gap: 25px;
  padding: 3px 0 0 56px;
  background: #4d4d4d;
  border: solid #303030;
  border-width: 0 2px;
  font-size: 28px;
}
.doc-name { white-space: nowrap; }
.tab-close { color: #cfcfcf; }
.account { flex: 1; display: flex; align-items: center; justify-content: flex-end; padding-right: 11px; }
.subscribe {
  width: 184px;
  height: 56px;
  margin-right: 11px;
  border-radius: 8px;
  background: #0073e6;
  color: #fff;
  font-size: 28px;
  font-weight: 700;
}
.account .tool { width: 83px; }

.toolbar {
  height: 94px;
  flex: none;
  display: flex;
  align-items: center;
  padding: 0 8px 0 5px;
  background: #4d4d4d;
  border-bottom: 2px solid #383636;
}
.tool { width: 88px; height: 56px; display: flex; align-items: center; justify-content: center; color: #c4c4c4; }
.tool svg { width: 48px; height: 48px; }
.tool:disabled { color: #8a8a8a; }
.tool.active { color: #52a8ff; }
.tool .wide { width: 62px; }
.tools-mid { display: flex; align-items: center; margin-left: 218px; }
.tools-end { display: flex; margin-left: auto; }
.pager { display: flex; align-items: center; gap: 12px; margin-left: 20px; font-size: 26px; }
.page-count { padding-top: 6px; }
.page-number, .zoom select {
  height: 58px;
  border: 0;
  border-bottom: 2px solid #646464;
  background: none;
  color: #e8e8e8;
  font: 26px "Liberation Sans", sans-serif;
  border-radius: 0;
  appearance: none;
}
.page-number { width: 52px; text-align: center; padding: 4px 4px 0 0; }
.rule { width: 2px; height: 56px; background: #3b3b3b; }
.pager + .rule { margin: 0 20px 0 42px; }
.zoom { position: relative; margin: 0 32px 0 20px; }
.zoom select { width: 146px; padding: 4px 16px 0; }
.zoom::after {
  content: "";
  position: absolute;
  right: 16px;
  top: 26px;
  border: 7px solid transparent;
  border-top: 8px solid #c4c4c4;
  border-bottom: 0;
}
.fit { margin-right: 12px; }
.keyboard + .rule { margin: 0 20px; }

/* Workspace */
.workspace { flex: 1; min-height: 0; display: flex; }
.rail { flex: none; width: 35px; display: flex; align-items: center; justify-content: center; background: #424242; }
.rail::before {
  content: "";
  border: 11px solid transparent;
  border-left: 12px solid #cacaca;
  border-right: 0;
}
.left-rail { padding-right: 1px; }
.right-rail { width: 36px; border: solid #3a3a3a; border-width: 0 2px; padding-right: 4px; }
.document {
  flex: 1;
  min-width: 0;
  display: flex;
  flex-direction: column;
  gap: 16px;
  overflow: hidden;
  background: #262626;
  border-right: 2px solid #2c2c2c;
}
.page { flex: none; background: #fff; color: #222; }
.page-4 { height: 876px; display: flex; flex-direction: column; justify-content: space-between; padding-bottom: 150px; }
.page-5 { padding-top: 61px; }
.running {
  display: flex;
  justify-content: space-between;
  padding: 0 67px;
  font: 28px/42px Inter, sans-serif;
  color: #000;
}
.match {
  margin: 0 120px 0 129px;
  border: solid #cbcbcb;
  border-width: 0 3px 4px;
  box-shadow: 0 4px 14px rgba(0, 0, 0, 0.12);
  font-family: "Open Sans", sans-serif;
  font-size: 27px;
  line-height: 42px;
}
.page-5 .match { margin-top: 106px; border-top-width: 3px; }
.match-head {
  display: flex;
  align-items: center;
  height: 78px;
  padding: 2px 20px 0 21px;
  border-bottom: 4px solid #cbcbcb;
  color: #444;
  font-weight: 300;
}
.match-head em { font-size: 28px; }
.num {
  width: 40px;
  height: 40px;
  margin-right: 42px;
  border: 3px solid #222;
  border-radius: 50%;
  text-align: center;
  font: 700 26px/34px "Liberation Serif", serif;
  color: #222;
}
.pct { margin-left: auto; }
.cols { display: grid; grid-template-columns: calc(50% - 3px) 1fr; }
.col { padding: 18px 20px 31px 22px; }
.col + .col { border-left: 4px solid #cbcbcb; }
.col h3 { margin: 0 0 20px; font-size: 27px; font-weight: 300; color: #333; }
.col p { margin: 0; white-space: nowrap; }

.doc-scroll {
  flex: none;
  width: 32px;
  display: flex;
  flex-direction: column;
  align-items: center;
  background: #474747;
  border-left: 2px solid #565656;
}
.split { width: 26px; height: 12px; margin-top: 2px; background: #848484; }
.thumb { width: 16px; height: 71px; margin-top: 627px; border-radius: 8px; background: #a5a5a5; }

/* Tools pane */
.panel { flex: none; width: 459px; display: flex; flex-direction: column; background: #4d4d4d; }
.search {
  flex: none;
  height: 70px;
  margin: 30px 28px 30px 30px;
  padding: 0 28px;
  border: 2px solid #626262;
  background: #464646;
  font: 26px "Liberation Sans", sans-serif;
  color: #e8e8e8;
  appearance: none;
}
.search::placeholder { color: #c6c6c6; opacity: 1; }
.tool-scroll { flex: 1; min-height: 0; display: flex; overflow: hidden; }
.tool-list { flex: 1; list-style: none; margin: 0; padding: 0; }
.tool-list li { position: relative; height: 92px; }
.entry {
  display: flex;
  align-items: center;
  gap: 20px;
  height: 88px;
  padding-left: 50px;
  font-size: 30px;
  white-space: nowrap;
  color: #e8e8e8;
}
.entry svg { width: 48px; height: 48px; }
.red svg { color: #ff7c80; }
.violet svg, .indigo svg { color: #9290f9; }
.pink svg { color: #fb6bb5; }
.magenta svg { color: #e763ea; }
.purple svg { color: #b283f0; }
.teal svg { color: #00bec6; }
.lime svg { color: #9dfb60; }
.yellow svg { color: #ffde3d; }
.green svg { color: #4be076; }
.badge-featured {
  position: absolute;
  top: 0;
  right: 30px;
  width: 130px;
  border-radius: 4px;
  background: #2172c8;
  color: #fff;
  text-align: center;
  font: 700 20px/28px "Liberation Sans", sans-serif;
}
.list-track { width: 29px; padding: 6px 5px 0 7px; background: #555; border-left: 1px solid #5e5e5e; }
.list-thumb { display: block; width: 16px; height: 81%; border-radius: 8px; background: #888; }
.trial { flex: none; padding: 34px 30px 11px; background: #424242; border-top: 2px solid #383838; }
.trial h2 { margin: 0 0 20px; font-size: 34px; line-height: 46px; font-weight: 400; -webkit-text-stroke: 1px #e8e8e8; }
.trial p { margin: 0 0 18px; font-size: 24px; line-height: 36px; }
.trial-links { display: flex; align-items: center; gap: 20px; font-size: 24px; line-height: 36px; color: #62cdf8; }
.trial-links span { width: 2px; height: 24px; background: #383838; }

/* Dock */
.dock-area {
  flex: none;
  padding: 36px 82px 11px;
  background:
    linear-gradient(rgba(20, 0, 6, 0.7), rgba(20, 0, 6, 0) 100%),
    #42020f;
}
.dock {
  height: 121px;
  display: flex;
  padding: 0 2px 0 4px;
  border: 2px solid #6d3a44;
  border-radius: 36px;
  background: #4f141f;
}
.app { position: relative; flex: 1; display: flex; justify-content: center; padding-top: 17px; }
.app svg { width: 74px; height: 74px; }
.running-app::after {
  content: "";
  position: absolute;
  bottom: 1px;
  width: 8px;
  height: 8px;
  border-radius: 50%;
  background: #cf8e9f;
}
.count {
  position: absolute;
  top: 8px;
  right: 2px;
  width: 34px;
  height: 34px;
  border-radius: 50%;
  background: #f3362f;
  color: #fff;
  font: 20px/34px Inter, sans-serif;
}
.dock-rule { width: 47px; display: flex; justify-content: center; padding-top: 14px; }
.dock-rule::before { content: ""; width: 2px; height: 90px; background: #8a5661; }
.petals rect { mix-blend-mode: multiply; }
.shield { font: 700 11px Inter, sans-serif; fill: #fff; text-anchor: middle; }
.month { font: 600 15px Inter, sans-serif; fill: #fff; text-anchor: middle; }
.day { font: 300 42px Inter, sans-serif; fill: #222; text-anchor: middle; }
.tv { font: 500 28px Inter, sans-serif; fill: #fff; }
.pages-title { font: 11px Inter, sans-serif; fill: #fff; }
.pdf { font: 500 15px "Noto Sans", sans-serif; fill: #222; text-anchor: middle; }
```
